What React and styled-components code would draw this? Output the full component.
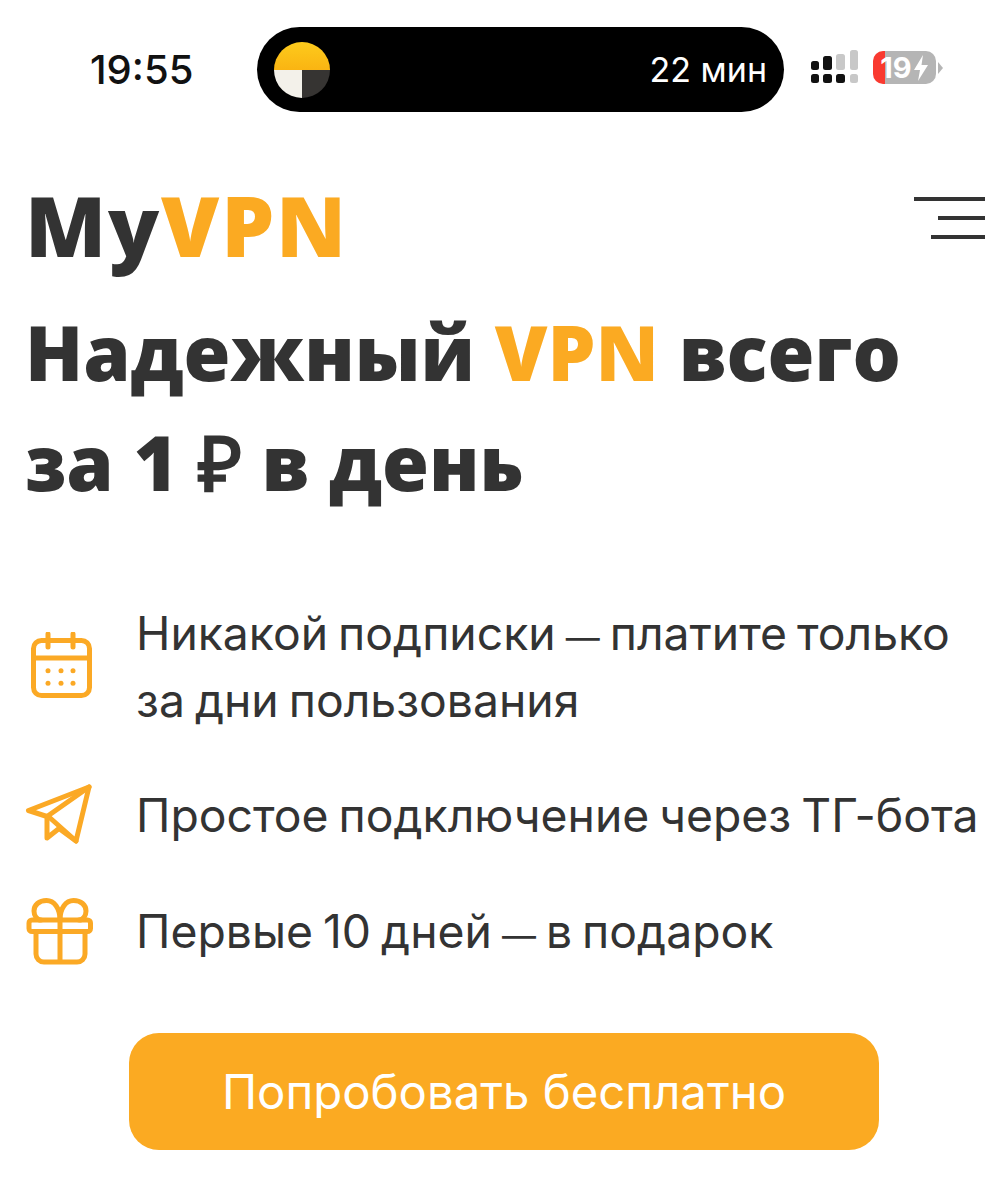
import styled, { createGlobalStyle } from "styled-components";

const GlobalStyle = createGlobalStyle`
  html, body { margin: 0; padding: 0; background: #fff; }
  body { font-family: "Inter", "Liberation Sans", sans-serif; color: #333; }
`;

const Page = styled.div`
  width: 1007px;
  height: 1200px;
  overflow: hidden;
  display: flex;
  flex-direction: column;
`;

const StatusBar = styled.div`
  display: flex;
  align-items: center;
  padding: 27px 0 0 90px;
  height: 85px;
`;

const Time = styled.span`
  width: 167px;
  font-size: 40px;
  font-weight: 500;
  color: #111;
`;

const Island = styled.div`
  width: 527px;
  height: 85px;
  border-radius: 43px;
  background: #000;
  display: flex;
  align-items: center;
  justify-content: space-between;
  padding: 0 17px 0 3px;
  box-sizing: border-box;
`;

const IslandText = styled.span`
  color: #fff;
  font-size: 34px;
  font-weight: 400;
`;

const StatusIcons = styled.div`
  display: flex;
  align-items: center;
  gap: 14px;
  margin-left: 27px;
  padding-bottom: 4px;
`;

const Battery = styled.div`
  position: relative;
  width: 63px;
  height: 33px;
  border-radius: 10px;
  background: linear-gradient(to right, #f93a30 12px, #b5b5b5 12px);
  display: flex;
  align-items: center;
  justify-content: center;
  gap: 1px;
  &::after {
    content: "";
    position: absolute;
    right: -7px;
    top: 11px;
    border-left: 5px solid #b5b5b5;
    border-top: 6px solid transparent;
    border-bottom: 6px solid transparent;
  }
`;

const BatteryText = styled.span`
  color: #fff;
  font-size: 29px;
  font-weight: 700;
  line-height: 33px;
`;

const Header = styled.header`
  display: flex;
  justify-content: space-between;
  align-items: flex-start;
  padding: 65px 22px 0 25px;
`;

const Logo = styled.div`
  font-family: "Open Sans", sans-serif;
  font-weight: 800;
  font-size: 84px;
  line-height: 96px;
  letter-spacing: 1.800px;
  color: #333;
`;

const Accent = styled.span`
  color: #fbaa22;
`;

const Burger = styled.div`
  display: flex;
  flex-direction: column;
  align-items: flex-end;
  gap: 15px;
  padding-top: 20px;
`;

const BurgerBar = styled.span`
  display: block;
  height: 4px;
  width: ${(p) => p.$w}px;
  background: #333;
`;

const Title = styled.h1`
  margin: 24px 0 0;
  padding-left: 25px;
  font-family: "Open Sans", sans-serif;
  font-weight: 800;
  font-size: 76px;
  line-height: 110px;
  color: #333;
  white-space: nowrap;
`;

const List = styled.ul`
  list-style: none;
  margin: 83px 0 0;
  padding: 0 0 0 25px;
  display: flex;
  flex-direction: column;
  gap: 46px;
`;

const Item = styled.li`
  display: flex;
  align-items: center;
  gap: 41px;
`;

const IconSvg = styled.svg`
  width: 70px;
  height: 70px;
  flex: none;
  fill: none;
  stroke: #fba925;
  stroke-width: 5;
  stroke-linecap: round;
  stroke-linejoin: round;
`;

const ItemText = styled.span`
  font-size: 46.300px;
  line-height: 67px;
  word-spacing: -3px;
  color: #333;
  white-space: nowrap;
`;

const Dash = styled.span`
  font-size: 34px;
  line-height: 0;
`;

const CtaRow = styled.div`
  display: flex;
  justify-content: center;
  padding: 67px 128px 0 129px;
`;

const Cta = styled.button`
  width: 750px;
  height: 117px;
  border: 0;
  border-radius: 30px;
  background: #fbaa22;
  color: #fff;
  font-family: "Inter", sans-serif;
  font-size: 47.300px;
  font-weight: 400;
`;

const YandexLogo = () => (
  <svg width="84" height="84" viewBox="0 0 84 84">
    <defs>
      <linearGradient id="yandexTop" x1="0" y1="0" x2="0" y2="1">
        <stop offset="0" stopColor="#fdcb1c" />
        <stop offset="1" stopColor="#fab412" />
      </linearGradient>
    </defs>
    <path d="M14 42a28 28 0 0 1 56 0z" fill="url(#yandexTop)" />
    <path d="M14 42h28v28a28 28 0 0 1-28-28z" fill="#f3f1ea" />
    <path d="M42 42h28a28 28 0 0 1-28 28z" fill="#363432" />
  </svg>
);

const Signal = () => (
  <svg width="48" height="36" viewBox="0 0 48 36">
    <rect x="0" y="11" width="8" height="9" rx="2.5" fill="#111" />
    <rect x="12" y="6" width="9" height="14" rx="2.5" fill="#111" />
    <rect x="25" y="4" width="9" height="16" rx="2.5" fill="#c8c8c8" />
    <rect x="39" y="0" width="8" height="20" rx="2.5" fill="#c8c8c8" />
    <rect x="0" y="24" width="8" height="9" rx="2.5" fill="#111" />
    <rect x="12" y="24" width="9" height="9" rx="2.5" fill="#111" />
    <rect x="25" y="24" width="9" height="9" rx="2.5" fill="#111" />
    <rect x="39" y="24" width="8" height="9" rx="2.5" fill="#c8c8c8" />
  </svg>
);

const Bolt = () => (
  <svg width="16" height="26" viewBox="0 0 16 26">
    <path d="M10 0 1 15h6l-2 11 10-16H8.500z" fill="#fff" />
  </svg>
);

const CalendarIcon = () => (
  <IconSvg viewBox="0 2 70 70">
    <rect x="8.500" y="10.500" width="56" height="55" rx="8" />
    <path d="M8.500 28h56M23 4v13M48 4v13" />
    <g fill="#fba925" stroke="none">
      <circle cx="23" cy="40.700" r="2.500" />
      <circle cx="36" cy="40.700" r="2.500" />
      <circle cx="48" cy="40.700" r="2.500" />
      <circle cx="23" cy="53.300" r="2.500" />
      <circle cx="36" cy="53.300" r="2.500" />
      <circle cx="48" cy="53.300" r="2.500" />
    </g>
  </IconSvg>
);

const PlaneIcon = () => (
  <IconSvg viewBox="0 0 70 70">
    <path d="M64 7 3.500 30.500 22 36.500V58L34 48.500 51 61z" />
    <path d="M22 36.500 64 7M24 37 51 61" />
  </IconSvg>
);

const GiftIcon = () => (
  <IconSvg viewBox="0 0 70 70">
    <rect x="4" y="24" width="61.500" height="11.500" rx="3" />
    <path d="M11 35.500V58a8 8 0 0 0 8 8h33a8 8 0 0 0 8-8V35.500M35 24v42" />
    <path d="M35 24C35 12 29 4.500 21.500 4.500 14 4.500 9 9 9 15c0 5 3 9 7 9" />
    <path d="M35 24C35 12 41 4.500 48.500 4.500 56 4.500 61 9 61 15c0 5-3 9-7 9" />
  </IconSvg>
);

const App = () => (
  <Page>
    <GlobalStyle />
    <StatusBar>
      <Time>19:55</Time>
      <Island>
        <YandexLogo />
        <IslandText>22 мин</IslandText>
      </Island>
      <StatusIcons>
        <Signal />
        <Battery>
          <BatteryText>19</BatteryText>
          <Bolt />
        </Battery>
      </StatusIcons>
    </StatusBar>
    <Header>
      <Logo>
        My<Accent>VPN</Accent>
      </Logo>
      <Burger>
        <BurgerBar $w={71} />
        <BurgerBar $w={47} />
        <BurgerBar $w={54} />
      </Burger>
    </Header>
    <Title>
      Надежный <Accent>VPN</Accent> всего
      <br />
      за 1 ₽ в день
    </Title>
    <List>
      <Item>
        <CalendarIcon />
        <ItemText>
          Никакой подписки <Dash>—</Dash> платите только
          <br />
          за дни пользования
        </ItemText>
      </Item>
      <Item>
        <PlaneIcon />
        <ItemText>Простое подключение через ТГ-бота</ItemText>
      </Item>
      <Item>
        <GiftIcon />
        <ItemText>
          Первые 10 дней <Dash>—</Dash> в подарок
        </ItemText>
      </Item>
    </List>
    <CtaRow>
      <Cta>Попробовать бесплатно</Cta>
    </CtaRow>
  </Page>
);

export default App;
